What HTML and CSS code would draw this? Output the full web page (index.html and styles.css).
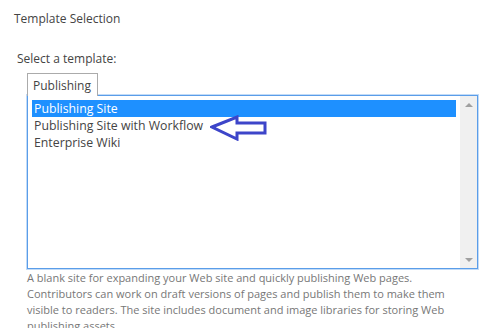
FILE: index.html
```html
<!DOCTYPE html>
<html>
  <head>
    <title>Template Selection</title>
    <meta charset="UTF-8" />
    <link rel="stylesheet" href="styles.css">
  </head>
  <body>
    <div class="section">
      <h2 class="section-title">Template Selection</h2>
      <div class="field">
        <label class="field-label">Select a template:</label>
        <div class="tabs">
          <div class="tab">Publishing</div>
        </div>
        <div class="listbox">
          <ul class="options">
            <li class="option selected">Publishing Site</li>
            <li class="option">Publishing Site with Workflow
              <svg class="pointer" width="58" height="26" viewBox="0 0 58 26">
                <path d="M2 12 L27 2 L27 8 L55 8 L55 18 L27 18 L27 24 Z" fill="none" stroke="#3d45c9" stroke-width="3" stroke-linejoin="miter"/>
              </svg>
            </li>
            <li class="option">Enterprise Wiki</li>
          </ul>
          <div class="scrollbar">
            <span class="arrow-up"></span>
            <span class="arrow-down"></span>
          </div>
        </div>
        <p class="description">A blank site for expanding your Web site and quickly publishing Web pages. Contributors can work on draft versions of pages and publish them to make them visible to readers. The site includes document and image libraries for storing Web publishing assets.</p>
      </div>
    </div>
  </body>
</html>
```
FILE: styles.css
```css
* {
  box-sizing: border-box;
  margin: 0;
  padding: 0;
}

body {
  background: #fff;
  font-family: "Open Sans", "Noto Sans", sans-serif;
  font-size: 12px;
  color: #444;
  overflow: hidden;
  height: 328px;
}

.section {
  padding: 10px 0 0 14px;
}

.section-title {
  font-size: 12px;
  font-weight: normal;
  line-height: 18px;
  color: #444;
}

.field {
  padding: 22px 0 0 2px;
}

.field-label {
  display: block;
  line-height: 18px;
  color: #444;
  padding-left: 1px;
}

.tabs {
  display: flex;
  padding: 5px 0 0 11px;
}

.tab {
  border: 1px solid #ababab;
  border-bottom: none;
  height: 23px;
  width: 71px;
  padding: 3px 0 0 5px;
  line-height: 17px;
  background: #fff;
  position: relative;
  z-index: 1;
  margin-bottom: -1px;
}

.listbox {
  margin-left: 11px;
  width: 451px;
  height: 174px;
  border: 1px solid #5a9de9;
  box-shadow: 0 0 0 1px #c2dbf7;
  display: flex;
  background: #fff;
}

.options {
  list-style: none;
  flex: 1;
  padding: 4px 4px 0 4px;
  font-size: 12.3px;
}

.option {
  height: 17px;
  line-height: 17px;
  padding-left: 2px;
  white-space: nowrap;
  position: relative;
}

.option.selected {
  background: #1e90ff;
  color: #fff;
}

.pointer {
  position: absolute;
  left: 178px;
  top: -2px;
}

.scrollbar {
  width: 17px;
  background: #f0f0f0;
  display: flex;
  flex-direction: column;
  justify-content: space-between;
  align-items: center;
  padding: 7px 0 6px;
}

.arrow-up,
.arrow-down {
  width: 0;
  height: 0;
  border-left: 4px solid transparent;
  border-right: 4px solid transparent;
}

.arrow-up {
  border-bottom: 4px solid #a0a0a0;
}

.arrow-down {
  border-top: 4px solid #a0a0a0;
}

.description {
  margin: 1px 0 0 11px;
  width: 430px;
  font-size: 11px;
  line-height: 16px;
  color: #777;
}
```
